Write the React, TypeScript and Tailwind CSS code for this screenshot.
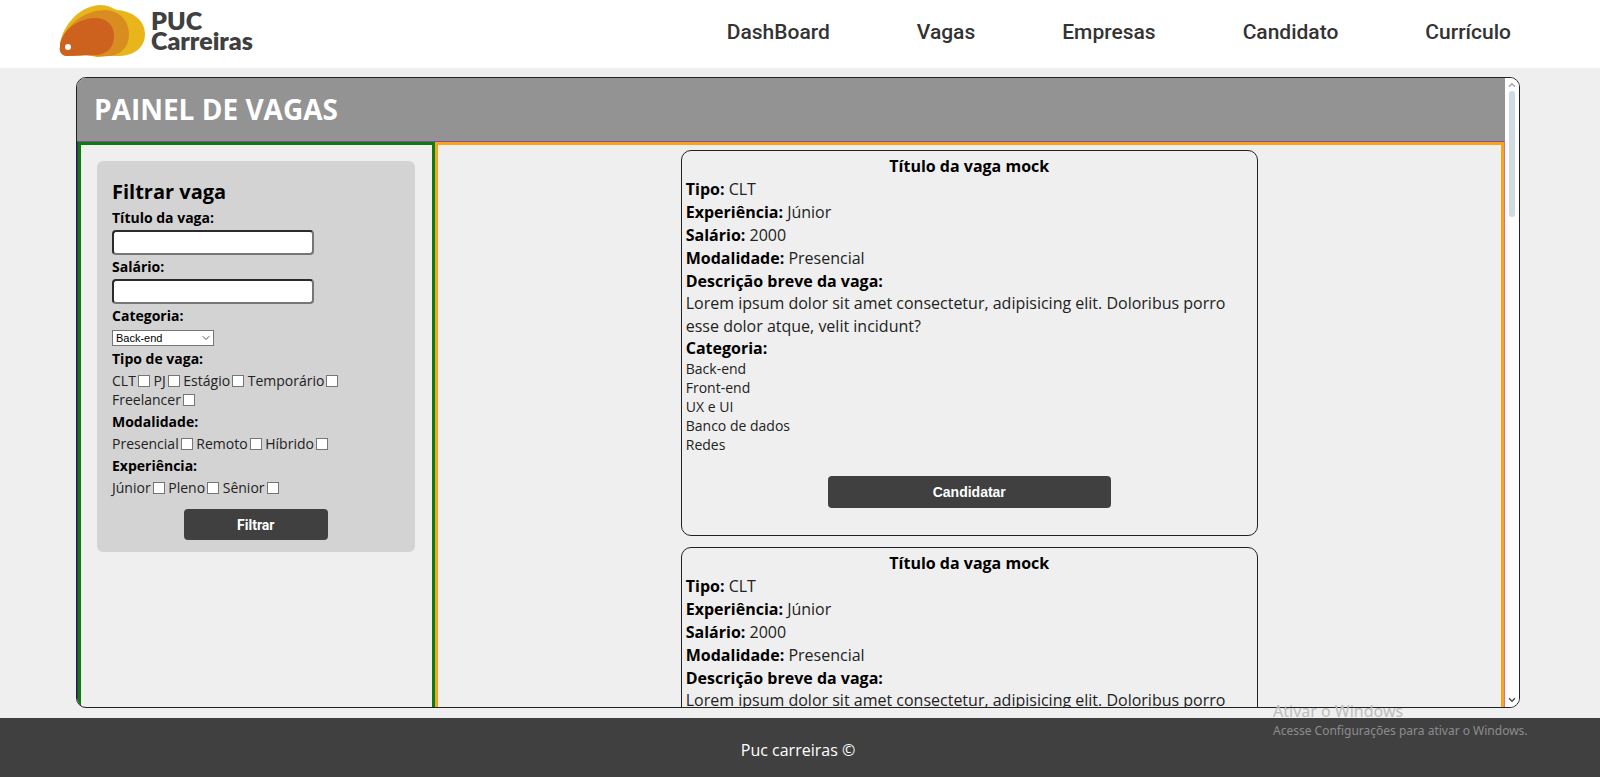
import React from "react";
import { ChevronDown, ChevronUp } from "lucide-react";

const NAV = ["DashBoard", "Vagas", "Empresas", "Candidato", "Currículo"];
const CATEGORIES = ["Back-end", "Front-end", "UX e UI", "Banco de dados", "Redes"];

const FILTER_GROUPS = [
  { title: "Tipo de vaga:", options: ["CLT", "PJ", "Estágio", "Temporário", "Freelancer"] },
  { title: "Modalidade:", options: ["Presencial", "Remoto", "Híbrido"] },
  { title: "Experiência:", options: ["Júnior", "Pleno", "Sênior"] },
];

const JOB = {
  title: "Título da vaga mock",
  facts: [
    ["Tipo:", "CLT"],
    ["Experiência:", "Júnior"],
    ["Salário:", "2000"],
    ["Modalidade:", "Presencial"],
  ],
  description:
    "Lorem ipsum dolor sit amet consectetur, adipisicing elit. Doloribus porro esse dolor atque, velit incidunt?",
};

function Logo() {
  return (
    <a href="#" className="flex items-center gap-1.5">
      <svg width="86" height="52" viewBox="0 0 86 52" aria-hidden="true">
        <path d="M1 42C1 26 17 1 41 0C49 0 53 3 58 5C73 6 86 15 86 29C86 43 75 51 58 51C50 51 45 51 40 52C34 52 31 50 26 50L7 51C3 50 0 47 1 42Z" fill="#e8b61b" />
        <path d="M1 42C1 30 18 5 47 5C61 6 70 16 70 29C70 43 61 51 48 51C37 52 31 50 26 50L7 51C3 50 0 47 1 42Z" fill="#d98d20" />
        <path d="M1 42C1 30 14 14 36 13C48 13 55 20 55 31C55 43 48 49 37 50L7 51C3 50 0 47 1 42Z" fill="#cd621e" />
        <circle cx="9" cy="42" r="3" fill="#fff" />
      </svg>
      <span className="flex flex-col pb-0.5 font-['Lato'] text-[25px] font-extrabold leading-5 text-[#404040]">
        <span>PUC</span>
        <span>Carreiras</span>
      </span>
    </a>
  );
}

function TextField({ id, label }: { id: string; label: string }) {
  return (
    <div className="mb-0.5">
      <label htmlFor={id} className="block font-bold leading-5">
        {label}
      </label>
      <input
        id={id}
        type="text"
        className="mt-0.5 block h-[25px] w-[202px] rounded border-2 border-t-[#2b2b2b] border-r-[#767676] border-b-[#767676] border-l-[#2b2b2b] bg-white px-1"
      />
    </div>
  );
}

function Filter() {
  return (
    <form
      onSubmit={(e) => e.preventDefault()}
      className="mt-4 mr-[17px] ml-4 rounded-md bg-[#d3d3d3] px-[15px] pt-[15px] pb-3 text-sm"
    >
      <h2 className="text-xl font-bold leading-8">Filtrar vaga</h2>
      <TextField id="titulo" label="Título da vaga:" />
      <TextField id="salario" label="Salário:" />
      <label htmlFor="categoria" className="block font-bold leading-5">
        Categoria:
      </label>
      <div className="relative mt-1 w-[102px]">
        <select
          id="categoria"
          className="block h-4 w-full appearance-none border border-[#767676] bg-white pl-[3px] font-['Liberation_Sans'] text-[11px] leading-none"
        >
          {CATEGORIES.map((c) => (
            <option key={c}>{c}</option>
          ))}
        </select>
        <ChevronDown className="pointer-events-none absolute top-0.5 right-0.5 size-3 text-[#555]" />
      </div>
      {FILTER_GROUPS.map((group) => (
        <fieldset key={group.title} className="mt-[3px]">
          <legend className="mb-0.5 font-bold leading-5">{group.title}</legend>
          <div className="leading-[19px] text-[#222]">
            {group.options.map((option) => (
              <React.Fragment key={option}>
                <label className="whitespace-nowrap">
                  {option}
                  <input
                    type="checkbox"
                    className="ml-0.5 inline-block size-3 appearance-none border border-[#767676] bg-white align-[-1px] checked:bg-[#0075ff]"
                  />
                </label>{" "}
              </React.Fragment>
            ))}
          </div>
        </fieldset>
      ))}
      <button
        type="submit"
        className="mx-auto mt-3 block h-[31px] w-1/2 rounded bg-[#404040] font-['Roboto'] text-sm font-bold text-white"
      >
        Filtrar
      </button>
    </form>
  );
}

function JobCard() {
  return (
    <article className="w-full max-w-[577px] shrink-0 rounded-[10px] border border-[#222] px-1 pt-1 pb-[27px]">
      <h3 className="text-center font-bold leading-[23px]">{JOB.title}</h3>
      <div className="leading-[23px] text-[#222]">
        {JOB.facts.map(([name, value]) => (
          <p key={name}>
            <strong className="text-black">{name}</strong> {value}
          </p>
        ))}
        <h4 className="font-bold leading-[22px] text-black">Descrição breve da vaga:</h4>
        <p>{JOB.description}</p>
        <h4 className="font-bold leading-[21px] text-black">Categoria:</h4>
      </div>
      <ul className="text-sm leading-[19px] text-[#222]">
        {CATEGORIES.map((c) => (
          <li key={c}>{c}</li>
        ))}
      </ul>
      <button
        type="button"
        className="mx-auto mt-[22px] block h-8 w-1/2 rounded bg-[#404040] font-['Liberation_Sans'] text-sm font-bold text-white"
      >
        Candidatar
      </button>
    </article>
  );
}

export default function App() {
  return (
    <div className="relative flex h-screen flex-col overflow-hidden bg-[#efefef] font-['Open_Sans',sans-serif] text-base text-black">
      <header className="flex h-[68px] shrink-0 items-center justify-between bg-white pr-[89px] pb-1.5 pl-[59px]">
        <Logo />
        <nav className="flex gap-[87px] pt-1 font-['Roboto'] text-[21px] font-medium text-[#333]">
          {NAV.map((item) => (
            <a key={item} href="#">
              {item}
            </a>
          ))}
        </nav>
      </header>

      <main className="mt-[9px] mr-20 mb-2.5 ml-[76px] flex min-h-0 flex-1 overflow-hidden rounded-[10px] border border-[#222]">
        <div className="flex min-w-0 flex-1 flex-col">
          <h1 className="shrink-0 bg-[#939393] px-[17px] text-[28px] font-bold leading-[63px] text-white">
            PAINEL DE VAGAS
          </h1>
          <div className="flex min-h-0 flex-1 border border-b-0 border-t-[#8a4ba0] border-r-[#d070a8] border-l-[#3a2a90]">
            <aside className="w-1/4 shrink-0 border-3 border-b-0 border-[#0a7d0a]">
              <Filter />
            </aside>
            <section className="flex flex-1 flex-col items-center gap-[11px] overflow-hidden border-3 border-b-0 border-[#f9a51a] pt-[5px]">
              <JobCard />
              <JobCard />
            </section>
          </div>
        </div>
        <div aria-hidden="true" className="flex w-3.5 shrink-0 flex-col items-center bg-white py-0.5">
          <ChevronUp className="size-2.5 text-[#aaa]" strokeWidth={4} />
          <div className="mt-px h-[126px] w-1.5 rounded-full bg-[#cfdae3]" />
          <ChevronDown className="mt-auto size-2.5 text-[#555]" strokeWidth={4} />
        </div>
      </main>

      <footer className="flex h-[59px] shrink-0 items-center justify-center bg-[#404040] pt-1 pr-1 text-white">
        Puc carreiras ©
      </footer>

      <div className="pointer-events-none absolute right-[68px] bottom-[37px] w-[259px] font-['Noto_Sans',sans-serif] whitespace-nowrap">
        <p className="text-base leading-[22px] text-[#bcbcbc]">Ativar o Windows</p>
        <p className="text-xs leading-[18px] text-[#8c8c8c]">Acesse Configurações para ativar o Windows.</p>
      </div>
    </div>
  );
}
